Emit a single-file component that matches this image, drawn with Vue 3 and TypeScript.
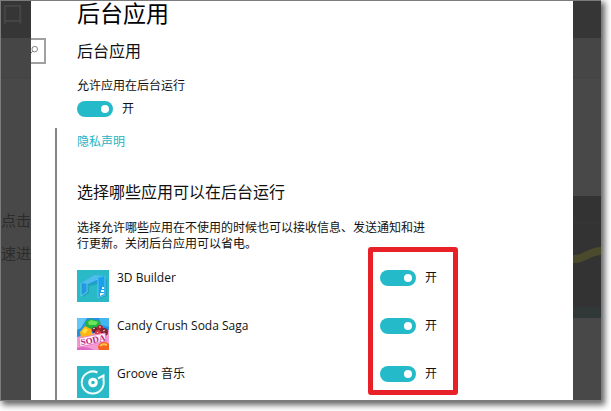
<script setup lang="ts">
import { ref } from 'vue'

interface BackgroundApp {
  id: string
  name: string
  enabled: boolean
}

const query = ref('')
const allowBackground = ref(true)
const apps = ref<BackgroundApp[]>([
  { id: 'builder', name: '3D Builder', enabled: true },
  { id: 'candy', name: 'Candy Crush Soda Saga', enabled: true },
  { id: 'groove', name: 'Groove 音乐', enabled: true },
])
</script>

<template>
  <div class="page">
    <div class="screen">
      <aside class="backdrop left">
        <div class="band top"><span class="glyph">口</span></div>
        <div class="band middle"></div>
        <p class="ghost">点击<br />速进</p>
      </aside>

      <main class="settings">
        <div class="rail">
          <label class="search">
            <svg viewBox="0 0 14 14" aria-hidden="true">
              <circle cx="4" cy="5" r="3" />
              <path d="M1.8 7.2 L-1 10.4" />
            </svg>
            <input v-model="query" type="search" aria-label="查找设置" />
          </label>
          <div class="divider"></div>
        </div>

        <div class="content">
          <h1>后台应用</h1>
          <h2 class="first">后台应用</h2>
          <p class="caption" id="allow-caption">允许应用在后台运行</p>
          <label class="switch">
            <input v-model="allowBackground" type="checkbox" aria-describedby="allow-caption" />
            <span>{{ allowBackground ? '开' : '关' }}</span>
          </label>
          <a class="privacy" href="#privacy">隐私声明</a>

          <h2 class="second">选择哪些应用可以在后台运行</h2>
          <p class="description">选择允许哪些应用在不使用的时候也可以接收信息、发送通知和进行更新。关闭后台应用可以省电。</p>

          <ul class="apps">
            <li v-for="app in apps" :key="app.id">
              <svg v-if="app.id === 'builder'" class="icon" viewBox="0 0 32 32" aria-hidden="true">
                <rect width="32" height="32" fill="#29b9c7" />
                <path d="M6 14 L19 6 L30 9 V26 L22 29 V14 L12 16 V23 L6 27 Z" fill="#188fb4" opacity=".5" />
                <path d="M4 13 L17 5 L22 8 V12 L11 14 L10 22 L4 26 Z" fill="#2398e2" />
                <path d="M4 13 L17 5 L28 6 L22 9 L11 14 Z" fill="#4fbdec" />
                <path d="M21 8 L28 6 V25 L21 28 Z" fill="#18a0eb" />
                <path d="M4 13 V26 L10 22 V14 M21 9 V28 L28 25 V6" fill="none" stroke="#6fd0ee" stroke-width=".8" />
                <path d="M25 17 h2 v2 h-2 Z M24 20 h3 v2 h-3 Z M23 23 h4 v1 l-4 2 Z" fill="#f0fcff" />
              </svg>
              <svg v-else-if="app.id === 'candy'" class="icon" viewBox="0 0 32 32" aria-hidden="true">
                <rect width="32" height="32" fill="#f29ad3" />
                <path d="M0 0 H32 V12 L0 19 Z" fill="#2690e5" />
                <path d="M0 0 H10 L4 10 L0 12 Z" fill="#62c7f4" />
                <path d="M22 0 H32 V9 L24 7 Z" fill="#43b5ef" />
                <path d="M8 4 L13 1 L23 3 L24 9 L17 12 L8 10 Z" fill="#24b342" />
                <path d="M11 4 L14 2 L21 4 L19 7 L12 7 Z" fill="#6ce35b" />
                <path d="M3 14 L8 8 L14 11 L16 18 L4 20 Z" fill="#ffb414" />
                <path d="M5 14 L8 10 L11 12 L8 16 Z" fill="#ffe03d" />
                <circle cx="18" cy="12" r="3" fill="#6c2137" />
                <circle cx="23" cy="10" r="3" fill="#b91e33" />
                <circle cx="27" cy="14" r="4" fill="#7c2632" />
                <circle cx="21" cy="15" r="3" fill="#d83a40" />
                <path d="M16 11 l2 -1 M22 9 l2 0 M26 13 l2 -1 M20 15 l1 -1" stroke="#ffd0b8" />
                <path d="M2 20 L28 15 L29 23 L3 29 Z" fill="#fff0fa" stroke="#ed83c1" />
                <ellipse cx="27" cy="29" rx="6" ry="5" fill="#f4631f" />
                <path d="M23 28 Q26 25 30 27" fill="none" stroke="#ffc44b" stroke-width="2" />
                <path d="M0 30 Q8 27 17 32 H0 Z" fill="#df65c7" />
                <text x="16" y="25" text-anchor="middle" transform="rotate(-11 16 22)">SODA</text>
              </svg>
              <svg v-else class="icon" viewBox="0 0 32 32" aria-hidden="true">
                <rect width="32" height="32" fill="#29b9c7" />
                <path d="M20.5 6.5 A11 11 0 1 0 26.5 14 V9.5 L21 12.5" fill="none" stroke="#effcfd" stroke-width="2" />
                <circle cx="16" cy="16.5" r="3.3" fill="none" stroke="#fff" stroke-width="3" />
              </svg>
              <label class="name" :for="`switch-${app.id}`">{{ app.name }}</label>
              <label class="switch">
                <input :id="`switch-${app.id}`" v-model="app.enabled" type="checkbox" />
                <span>{{ app.enabled ? '开' : '关' }}</span>
              </label>
            </li>
            <li class="highlight" aria-hidden="true"></li>
          </ul>
        </div>
      </main>

      <aside class="backdrop right">
        <div class="band top"></div>
        <div class="band middle"></div>
        <svg class="chart" viewBox="0 0 28 122" preserveAspectRatio="none" aria-hidden="true">
          <rect width="28" height="122" fill="#333" />
          <path d="M0 27 H28" stroke="#383838" />
          <path d="M0 63 C12 64 15 55 28 55" fill="none" stroke="#4b4a2c" stroke-width="8" />
          <rect y="111" width="28" height="11" fill="#303838" />
        </svg>
      </aside>
    </div>
  </div>
</template>

<style>
body {
  background: #fff;
}
</style>

<style scoped>
* {
  box-sizing: border-box;
}

.page {
  display: flex;
  height: 100vh;
  padding: 0 10px 10px 0;
  overflow: hidden;
  color: #111;
  font-family: "Open Sans", "Noto Sans CJK SC", sans-serif;
  font-size: 12px;
  line-height: 16px;
}

.screen {
  display: flex;
  flex: 1;
  min-width: 0;
  border: 1px solid #7c7c7c;
  border-right: 0;
  background: #fff;
  box-shadow: 3px 3px 6px 1px rgba(0, 0, 0, 0.6);
}

h1,
h2,
p,
ul {
  margin: 0;
  padding: 0;
  font-weight: 400;
}

.backdrop {
  display: flex;
  flex: none;
  flex-direction: column;
  background: #484848;
}

.left {
  width: 30px;
}

.right {
  width: 28px;
}

.band {
  flex: none;
}

.top {
  height: 37px;
  background: #363636;
}

.middle {
  height: 40px;
  border-bottom: 1px solid #424242;
  background: #464646;
}

.glyph {
  display: block;
  color: #464646;
  font-size: 23px;
  line-height: 24px;
}

.ghost {
  padding-top: 126px;
  color: #2c2c2c;
  font-size: 15px;
  line-height: 33px;
  white-space: nowrap;
}

.chart {
  flex: none;
  width: 28px;
  height: 122px;
  margin-top: 118px;
}

.settings {
  display: flex;
  flex: 1;
  min-width: 0;
}

.rail {
  display: flex;
  flex: none;
  flex-direction: column;
  width: 46px;
  padding-top: 37px;
}

.search {
  display: flex;
  align-items: center;
  width: 15px;
  height: 26px;
  border: 2px solid #a0a0a0;
  border-left: 0;
}

.search svg {
  flex: none;
  width: 13px;
  height: 14px;
  fill: none;
  stroke: #777;
}

.search input {
  width: 0;
  min-width: 0;
  padding: 0;
  border: 0;
}

.divider {
  flex: 1;
  width: 26px;
  margin-top: 64px;
  border-right: 2px solid #858585;
}

.content {
  flex: 1;
  min-width: 0;
}

h1 {
  color: #000;
  font-size: 23px;
  line-height: 24px;
}

h2 {
  font-size: 16px;
  line-height: 24px;
}

.first {
  margin-top: 14px;
}

.caption {
  margin-top: 15px;
}

.switch {
  display: flex;
  align-items: center;
  gap: 9px;
  height: 16px;
}

.caption + .switch {
  margin-top: 7px;
}

.switch input {
  flex: none;
  width: 36px;
  height: 16px;
  margin: 0;
  padding: 4px;
  border-radius: 8px;
  background: #999;
  appearance: none;
}

.switch input:checked {
  background: #25bac9;
}

.switch input::before {
  display: block;
  width: 8px;
  height: 8px;
  border-radius: 50%;
  background: #fff;
  content: "";
}

.switch input:checked::before {
  margin-left: auto;
}

.privacy {
  display: block;
  width: fit-content;
  margin-top: 17px;
  color: #1fb3c0;
  text-decoration: none;
}

.second {
  margin-top: 30px;
}

.description {
  max-width: 354px;
  margin-top: 16px;
}

.apps {
  display: grid;
  position: relative;
  gap: 16px;
  margin-top: 18px;
  list-style: none;
}

.apps li:not(.highlight) {
  display: grid;
  grid-template-columns: 32px 255px auto;
  column-gap: 8px;
  height: 32px;
}

.icon {
  width: 32px;
  height: 32px;
}

.icon text {
  fill: #bd247f;
  font-family: "Liberation Serif", serif;
  font-size: 9px;
  font-weight: 700;
}

.highlight {
  position: absolute;
  top: -23px;
  left: 291px;
  width: 90px;
  height: 148px;
  border: 5px solid #e82028;
  border-radius: 3px;
  pointer-events: none;
}
</style>
